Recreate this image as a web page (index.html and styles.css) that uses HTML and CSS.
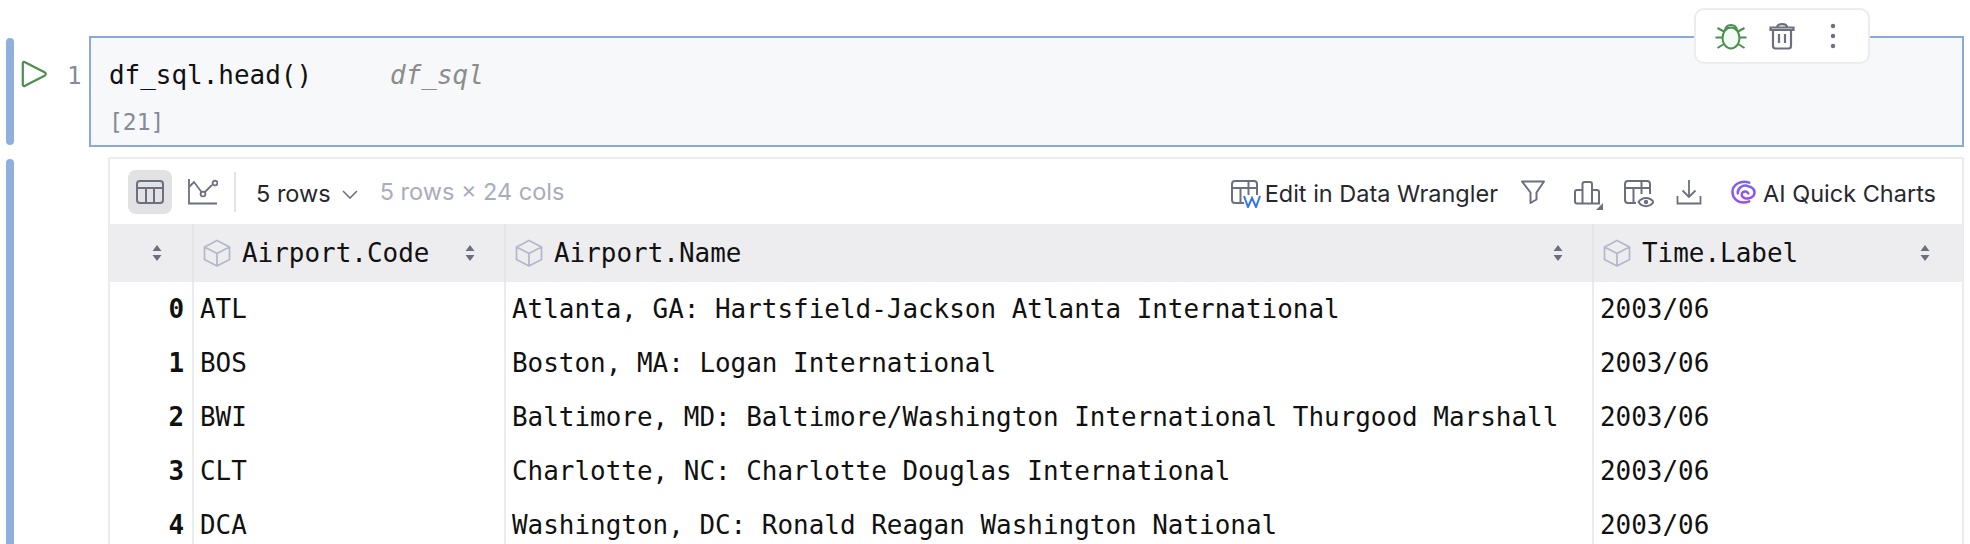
FILE: index.html
```html
<!DOCTYPE html>
<html lang="en">
<head>
<meta charset="utf-8">
<title>Notebook cell</title>
<link rel="stylesheet" href="styles.css">
</head>
<body>
<main class="notebook">
  <section class="cell">
    <div class="gutter">
      <span class="bar"></span>
      <svg class="run" viewBox="0 0 26 28"><path d="M1.8 3.2 C1.8 2 3 1.5 4 2.2 L24 12.6 C25.1 13.3 25.1 14.7 24 15.4 L4 25.8 C3 26.5 1.8 26 1.8 24.8 Z" fill="none" stroke="#4a8f4f" stroke-width="2.2" stroke-linejoin="round"/></svg>
      <span class="lineno">1</span>
    </div>
    <div class="editor">
      <pre class="code">df_sql.head()     <em class="ghost">df_sql</em></pre>
      <div class="count">[21]</div>
      <div class="float-bar">
        <svg class="fb-icon" viewBox="0 0 32 28" fill="none" stroke="#4a8f4f" stroke-width="2"><ellipse cx="16" cy="16" rx="8.5" ry="10.5" fill="#f2fcf3"/><path d="M10 8.5 C11 1 21 1 22 8.5 M9 9.5 L2.5 6 M23 9.5 L29.5 6 M7.5 15.5 H0.5 M24.5 15.5 H31.5 M9 22 L2.5 26 M23 22 L29.5 26"/></svg>
        <svg class="fb-icon" viewBox="0 0 26 28" fill="none" stroke="#6c707e" stroke-width="2.2"><path d="M1.5 8 V5.5 H24.5 V8 Z M8 5.5 C8 1 18 1 18 5.5 M4 8 V24 C4 25.5 5 26.5 6.5 26.5 H19.5 C21 26.5 22 25.5 22 24 V8 M10 12 V21 M16 12 V21"/></svg>
        <svg class="fb-icon" viewBox="0 0 6 28" fill="#6c707e"><circle cx="3" cy="4" r="2.2"/><circle cx="3" cy="14" r="2.2"/><circle cx="3" cy="24" r="2.2"/></svg>
      </div>
    </div>
  </section>

  <section class="cell output-cell">
    <div class="gutter"><span class="bar"></span></div>
    <div class="output">
      <div class="toolbar">
        <button class="view-btn active"><svg viewBox="0 0 28 24" fill="none" stroke="#6c707e" stroke-width="2"><rect x="1" y="1" width="26" height="22" rx="3"/><path d="M1 8 H27 M10 8 V23 M18 8 V23"/></svg></button>
        <button class="view-btn"><svg viewBox="0 0 30 26" fill="none" stroke="#6c707e" stroke-width="1.8"><path d="M1 0 V24.5 H29"/><path d="M1 8 L6 3 L15 15 L24 6" /><circle cx="15" cy="15" r="2.4" fill="#fff"/><circle cx="27" cy="4" r="2.4" fill="#fff"/></svg></button>
        <span class="sep"></span>
        <span class="rows">5 rows</span>
        <svg class="chev" viewBox="0 0 16 9" fill="none" stroke="#6c707e" stroke-width="1.6"><path d="M1 1 L8 8 L15 1"/></svg>
        <span class="dims">5 rows × 24 cols</span>
        <span class="spacer"></span>
        <svg class="t-icon wrangler" viewBox="0 0 30 28" fill="none" stroke="#6c707e" stroke-width="2"><path d="M13 23 H4 C2.3 23 1 21.7 1 20 V4 C1 2.3 2.3 1 4 1 H23 C24.7 1 26 2.3 26 4 V15 M1 8 H26 M9.5 8 V23 M17.5 1 V15"/><path d="M13 16 L17 27 L21 18 L25 27 L29 16" stroke="#3574f0"/></svg>
        <span class="t-label">Edit in Data Wrangler</span>
        <svg class="t-icon filter" viewBox="0 0 24 24" fill="none" stroke="#6c707e" stroke-width="2"><path d="M1 1.5 H23 L15.5 12.5 V19.5 L9.5 23 V12.5 Z" stroke-linejoin="round"/></svg>
        <svg class="t-icon bars" viewBox="0 0 30 29" fill="none" stroke="#6c707e" stroke-width="2"><path d="M8.5 22.5 H3 C1.9 22.5 1 21.6 1 20.5 V11 C1 9.9 1.9 9 3 9 H8.5 M8.5 22.5 V3 C8.5 1.9 9.4 1 10.5 1 H16 C17.1 1 18 1.9 18 3 V22.5 Z M18 9 H23 C24.1 9 25 9.9 25 11 V22.5 H18"/><path d="M29 22 V29 H22 Z" fill="#6c707e" stroke="none"/></svg>
        <svg class="t-icon tbl-eye" viewBox="0 0 30 28" fill="none" stroke="#6c707e" stroke-width="2"><path d="M12 23 H4 C2.3 23 1 21.7 1 20 V4 C1 2.3 2.3 1 4 1 H23 C24.7 1 26 2.3 26 4 V14 M1 8 H26 M9.5 8 V23 M17.5 1 V14"/><path d="M14.5 22 C18 16.5 26 16.5 29.5 22 C26 27.5 18 27.5 14.5 22 Z"/><circle cx="22" cy="22" r="2.2" fill="#6c707e" stroke="none"/></svg>
        <svg class="t-icon download" viewBox="0 0 26 26" fill="none" stroke="#6c707e" stroke-width="1.8"><path d="M13 1 V18 M6.5 11.5 L13 18 L19.5 11.5 M1.5 17 V24.5 H24.5 V17"/></svg>
        <svg class="t-icon spiral" viewBox="0 0 26 25" fill="none" stroke-width="2.6" stroke-linecap="round"><defs><linearGradient id="ai" x1="0.5" y1="0" x2="0.5" y2="1"><stop offset="0" stop-color="#7a62f0"/><stop offset="1" stop-color="#9a4fe8"/></linearGradient></defs><path d="M19 2.8 C10 -0.5 1.5 5 1.5 12.5 C1.5 19 7 23.5 13 23.5 C15 23.5 17 23.2 19 22.3" stroke="url(#ai)"/><path d="M7 14 C6.5 8.5 12 5 16.5 6 C21 7 24.5 9.5 24.5 13 C24.5 17.5 19 20 14.5 19 C11 18 10 14.5 12.2 12.7 C14.2 11.2 17 12 18 14" stroke="url(#ai)"/></svg>
        <span class="t-label ai">AI Quick Charts</span>
      </div>
      <table class="grid">
        <colgroup><col class="c-idx"><col class="c-code"><col class="c-name"><col class="c-time"></colgroup>
        <thead>
          <tr>
            <th><div class="th idx"><svg class="sort"><use href="#sort"/></svg></div></th>
            <th><div class="th"><svg class="cube"><use href="#cube"/></svg><span class="th-name">Airport.Code</span><svg class="sort"><use href="#sort"/></svg></div></th>
            <th><div class="th"><svg class="cube"><use href="#cube"/></svg><span class="th-name">Airport.Name</span><svg class="sort"><use href="#sort"/></svg></div></th>
            <th><div class="th last"><svg class="cube"><use href="#cube"/></svg><span class="th-name">Time.Label</span><svg class="sort"><use href="#sort"/></svg></div></th>
          </tr>
        </thead>
        <tbody>
          <tr><td class="idx-cell">0</td><td>ATL</td><td>Atlanta, GA: Hartsfield-Jackson Atlanta International</td><td>2003/06</td></tr>
          <tr><td class="idx-cell">1</td><td>BOS</td><td>Boston, MA: Logan International</td><td>2003/06</td></tr>
          <tr><td class="idx-cell">2</td><td>BWI</td><td>Baltimore, MD: Baltimore/Washington International Thurgood Marshall</td><td>2003/06</td></tr>
          <tr><td class="idx-cell">3</td><td>CLT</td><td>Charlotte, NC: Charlotte Douglas International</td><td>2003/06</td></tr>
          <tr><td class="idx-cell">4</td><td>DCA</td><td>Washington, DC: Ronald Reagan Washington National</td><td>2003/06</td></tr>
        </tbody>
      </table>
    </div>
  </section>
</main>
<svg class="defs" aria-hidden="true">
  <symbol id="sort" viewBox="0 0 10 18"><path d="M5 1 L9.5 7 H0.5 Z M5 17 L9.5 11 H0.5 Z" fill="#6c707e"/></symbol>
  <symbol id="cube" viewBox="0 0 28 28"><path d="M14 1.5 L26.5 8 V20.5 L14 27 L1.5 20.5 V8 Z M1.5 8 L14 14.5 L26.5 8 M14 14.5 V27" fill="none" stroke="#b4b8c8" stroke-width="1.8" stroke-linejoin="round"/></symbol>
</svg>
</body>
</html>
```
FILE: styles.css
```css
* { box-sizing: border-box; }
html, body { margin: 0; height: 544px; overflow: hidden; background: #fff; }
body { font-family: "Inter", "Liberation Sans", sans-serif; color: #27282e; }
.defs { display: none; }
.notebook { display: flex; flex-direction: column; padding-top: 36px; gap: 10px; }
.cell { display: flex; }
.gutter { width: 89px; flex: none; display: flex; align-items: flex-start; padding-left: 6px; }
.bar { width: 8px; align-self: stretch; flex: none; background: #8fb0dc; border-radius: 4px; margin: 2px 0; }
.run { width: 26px; height: 28px; margin: 24px 0 0 7px; flex: none; }
.lineno { font: 24px/1 "DejaVu Sans Mono", monospace; color: #868a99; margin: 28px 0 0 20px; }
.editor { position: relative; flex: 1; margin-right: 6px; height: 111px; background: #f7f8fa; border: 2px solid #89a9d8; padding: 20px 0 0 18px; }
.code { margin: 0; font: 25.95px/34px "DejaVu Sans Mono", monospace; color: #111; }
.ghost { color: #8c8c8c; font-style: italic; }
.count { font: 23px/30px "DejaVu Sans Mono", monospace; color: #868a99; margin: 15px 0 0; }
.float-bar { position: absolute; top: -30px; right: 92px; width: 176px; height: 56px; background: #fff; border: 2px solid #ebecf0; border-radius: 10px; display: flex; align-items: center; padding-left: 19px; gap: 22px; }
.fb-icon { height: 28px; width: auto; flex: none; }
.fb-icon:last-child { margin-left: 13px; }
.output-cell { height: 400px; }
.output-cell .gutter { width: 108px; }
.output-cell .bar { margin: 2px 0 0; border-radius: 4px 4px 0 0; }
.output { flex: 1; margin-right: 6px; border: 2px solid #ebecf0; border-bottom: 0; overflow: hidden; }
.toolbar { display: flex; align-items: center; height: 65px; padding: 0 26px 0 18px; }
.view-btn { width: 44px; height: 44px; border: 0; padding: 0; border-radius: 8px; background: none; display: flex; align-items: center; justify-content: center; margin-right: 7px; }
.view-btn.active { background: #e2e2e4; margin-right: 9px; }
.view-btn svg { width: 28px; height: 24px; }
.view-btn:nth-child(2) svg { width: 30px; height: 26px; }
.sep { width: 2px; height: 40px; background: #e3e4e8; margin: 0 20px 0 2px; }
.rows { font-size: 23.5px; color: #27282e; margin-top: 3px; }
.chev { width: 16px; height: 9px; margin: 6px 22px 0 11px; }
.dims { font-size: 23.5px; color: #a8adbd; }
.spacer { flex: 1; }
.t-icon { flex: none; }
.wrangler { width: 30px; height: 28px; margin: 21px 4px 0 0; align-self: flex-start; }
.t-label { font-size: 23.5px; color: #27282e; white-space: nowrap; margin-top: 4px; }
.filter { width: 24px; height: 24px; margin: 0 29px 0 23px; }
.bars { width: 30px; height: 29px; margin-right: 20px; align-self: flex-start; margin-top: 22px; }
.tbl-eye { width: 30px; height: 28px; margin-right: 22px; align-self: flex-start; margin-top: 21px; }
.download { width: 26px; height: 26px; margin-right: 29px; }
.spiral { width: 25px; height: 24px; margin-right: 7px; }
.grid { table-layout: fixed; border-collapse: separate; border-spacing: 0; width: 1852px; font: 25.95px/34px "DejaVu Sans Mono", monospace; color: #111; }
.c-idx { width: 82px; }
.c-code { width: 312px; }
.c-name { width: 1088px; }
.c-time { width: 370px; }
.grid th { height: 58px; background: #ededef; padding: 0; border-left: 2px solid #e6e6ea; font-weight: 400; text-align: left; }
.grid th:first-child, .grid td:first-child { border-left: 0; }
.th { display: flex; align-items: center; padding: 0 29px 0 9px; }
.th.idx { justify-content: flex-end; padding-right: 30px; }
.th.last { padding-right: 32px; }
.th-name { flex: 1; margin-left: 11px; }
.cube { width: 28px; height: 28px; flex: none; }
.sort { width: 10px; height: 18px; flex: none; }
.grid td { height: 54px; padding: 0 0 0 6px; border-left: 2px solid #ebecf0; white-space: nowrap; }
.grid td.idx-cell { text-align: right; font-weight: 700; padding: 0 8px 0 0; }
```
